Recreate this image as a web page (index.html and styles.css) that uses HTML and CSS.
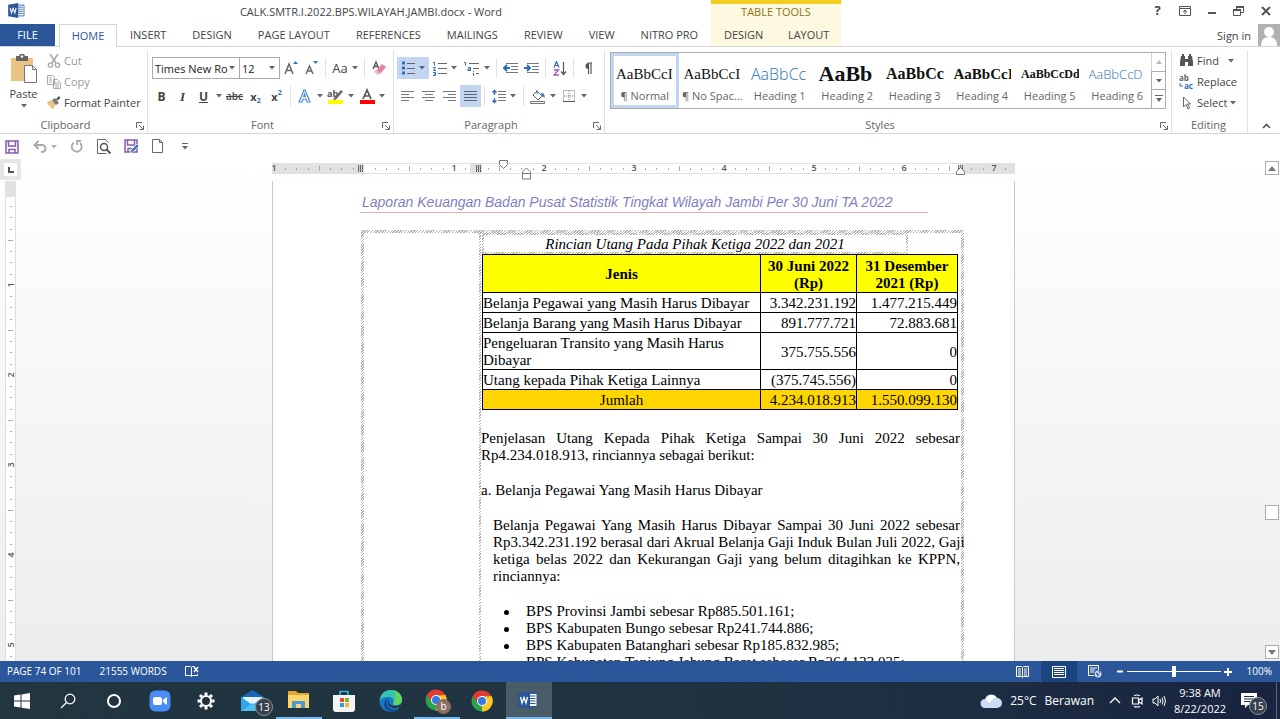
FILE: index.html
```
<!DOCTYPE html>
<html lang="en">
<head>
<meta charset="utf-8">
<title>CALK.SMTR.I.2022.BPS.WILAYAH.JAMBI.docx - Word</title>
<link rel="stylesheet" href="styles.css">
</head>
<body>
<svg class="defs" aria-hidden="true">
  <defs>
    <symbol id="caret" viewBox="0 0 6 4"><path d="M0 0h6L3 3.500z" fill="#666"/></symbol>
    <symbol id="launch" viewBox="0 0 8 8"><path d="M.5 6V.5H6M3 3l4 4M7.500 3.500v4h-4" fill="none" stroke="#666"/></symbol>
    <symbol id="chrome" viewBox="0 0 22 22">
      <path d="M11 11 20.200 5.800A10.500 10.500 0 0 1 11 21.500z" fill="#fdc727"/>
      <path d="M11 11V21.500A10.500 10.500 0 0 1 1.900 5.800z" fill="#2ba24c"/>
      <path d="M1.900 5.800 6.800 13.500 11 6.200H20.400A10.500 10.500 0 0 0 1.900 5.800z" fill="#e33b2e"/>
      <path d="M15.200 13.500 11 21.500A10.500 10.500 0 0 0 20.400 6.200H11z" fill="#fdc727"/>
      <circle cx="11" cy="11" r="5" fill="#fff"/><circle cx="11" cy="11" r="4" fill="#3479e8"/>
    </symbol>
    <symbol id="word" viewBox="0 0 20 18">
      <path d="M10 2.500h9v13h-9z" fill="#fff" stroke="#2b579a"/><path d="M12 5h5.500M12 7.500h5.500M12 10h5.500M12 12.500h5.500" stroke="#2b579a"/>
      <path d="M0 2 12 0v18L0 16z" fill="#2b579a"/><path d="m2.500 6 1.500 6L6 6.500 8 12l1.500-6" fill="none" stroke="#fff" stroke-width="1.300"/>
    </symbol>
    <pattern id="ticks-h" width="90" height="11" patternUnits="userSpaceOnUse" x="2">
      <path d="M11.500 5v2M22.500 5v2M34.500 5v2M45.500 3v5M56.500 5v2M67.500 5v2M79.500 5v2" stroke="#aaa"/>
    </pattern>
    <pattern id="ticks-v" width="11" height="90" patternUnits="userSpaceOnUse" y="14">
      <path d="M5 11.500h2M5 22.500h2M5 34.500h2M3 45.500h5M5 56.500h2M5 67.500h2M5 79.500h2" stroke="#aaa"/>
    </pattern>
  </defs>
</svg>

<header class="titlebar">
  <svg class="app-icon" width="17" height="15"><use href="#word"/></svg>
  <h1 class="title">CALK.SMTR.I.2022.BPS.WILAYAH.JAMBI.docx - Word</h1>
  <div class="tools-title">TABLE TOOLS</div>
  <div class="window-buttons">
    <button aria-label="Help"><b>?</b></button>
    <button aria-label="Ribbon display options"><svg width="12" height="10"><path d="M.5.5h11v9H.5zM1 2.500h10M6 8V4M4 6l2-2 2 2" fill="none" stroke="#555"/></svg></button>
    <button aria-label="Minimize"><svg width="10" height="10"><path d="M1 7h8" stroke="#555" stroke-width="2"/></svg></button>
    <button aria-label="Restore"><svg width="11" height="10"><path d="M3.500 3V1h7v5.500H8M.5 4h7v5.500h-7z" fill="none" stroke="#555"/><path d="M3 1h8M0 4h8" stroke="#555" stroke-width="2"/></svg></button>
    <button aria-label="Close"><svg width="10" height="10"><path d="m1 1 8 8M9 1 1 9" stroke="#555" stroke-width="2"/></svg></button>
  </div>
</header>

<nav class="tabs">
  <button class="tab file">FILE</button>
  <button class="tab active">HOME</button>
  <button class="tab">INSERT</button>
  <button class="tab">DESIGN</button>
  <button class="tab">PAGE LAYOUT</button>
  <button class="tab">REFERENCES</button>
  <button class="tab">MAILINGS</button>
  <button class="tab">REVIEW</button>
  <button class="tab">VIEW</button>
  <button class="tab">NITRO PRO</button>
  <div class="context-tabs"><button class="tab">DESIGN</button><button class="tab">LAYOUT</button></div>
  <a class="signin" href="#">Sign in <svg width="22" height="22"><path d="M0 0h22v22H0z" fill="#b1b1b1"/><circle cx="11" cy="8" r="5" fill="#fff"/><path d="M3 22c0-6 3-9 8-9s8 3 8 9z" fill="#fff"/></svg></a>
</nav>

<section class="ribbon">
  <div class="group clipboard">
    <div class="group-body">
      <button class="paste">
        <svg width="28" height="29"><path d="M1 4h22v23H1z" fill="#eac282"/><path d="M6 2h3l1-2h4l1 2h3v5H6z" fill="#666"/><circle cx="12" cy="2.500" r="1.200" fill="#fff"/><path d="M14.500 11.500h8l4 4v13h-12z" fill="#fff" stroke="#777"/><path d="M22.500 11.500v4h4" fill="none" stroke="#777"/></svg>
        <span>Paste</span>
        <svg width="6" height="4"><use href="#caret"/></svg>
      </button>
      <div class="stack">
        <button class="off"><svg width="14" height="14"><path d="M3 0l6 9M11 0 5 9" stroke="#aaa" stroke-width="1.600"/><circle cx="3.500" cy="11" r="2.200" fill="none" stroke="#aaa" stroke-width="1.300"/><circle cx="10.500" cy="11" r="2.200" fill="none" stroke="#aaa" stroke-width="1.300"/></svg>Cut</button>
        <button class="off"><svg width="14" height="14"><path d="M.5.500h5l2 2v7h-7zM6.500 4.500h4l3 3v6h-7zM2 3h3M2 5h3M2 7h3M8 8h4M8 10h4M8 12h4" fill="none" stroke="#aaa"/></svg>Copy</button>
        <button><svg width="14" height="14"><path d="M0 6 5 4l4 4-3 5-2-1-1-2-2-1z" fill="#eac282"/><path d="m5 4 3-2 4 5-3 2z" fill="#777"/><path d="m9 3 3-3 1.500 2-3 2.500z" fill="#555"/></svg>Format Painter</button>
      </div>
    </div>
    <div class="group-name">Clipboard<button class="launcher" aria-label="Clipboard options"><svg width="8" height="8"><use href="#launch"/></svg></button></div>
  </div>

  <div class="group font">
    <div class="group-body rows">
      <div class="row">
        <label class="combo face"><input aria-label="Font" value="Times New Ro"><svg width="6" height="4"><use href="#caret"/></svg></label><label class="combo size"><input aria-label="Font size" value="12"><svg width="6" height="4"><use href="#caret"/></svg></label>
        <button class="tool" aria-label="Grow font"><svg width="16" height="16"><path d="m2 14 4-10 4 10M3.500 10.500h5" fill="none" stroke="#666" stroke-width="1.500"/><path d="M10 4 12.500 1 15 4z" fill="#3a76b8"/></svg></button>
        <button class="tool" aria-label="Shrink font"><svg width="16" height="16"><path d="m2 14 3.500-8L9 14M3.500 11h4" fill="none" stroke="#666" stroke-width="1.500"/><path d="M9 1h5L11.500 4z" fill="#3a76b8"/></svg></button>
        <i class="sep"></i>
        <button class="tool wide case" aria-label="Change case">Aa<svg width="6" height="4"><use href="#caret"/></svg></button>
        <i class="sep"></i>
        <button class="tool" aria-label="Clear formatting"><svg width="16" height="16"><path d="m2 9 3-7 3 7M3 6.500h4" fill="none" stroke="#555" stroke-width="1.300"/><path d="m5 11 6-7 4 3-6 7z" fill="#e8819a"/><path d="m3 12 2-2 4 3-2 2z" fill="#f3b5c2"/></svg></button>
      </div>
      <div class="row">
        <button class="tool"><b>B</b></button>
        <button class="tool"><i class="ital">I</i></button>
        <button class="tool"><u>U</u></button>
        <button class="drop" aria-label="Underline style"><svg width="6" height="4"><use href="#caret"/></svg></button>
        <button class="tool strike"><s>abc</s></button>
        <button class="tool script">x<sub>2</sub></button>
        <button class="tool script">x<sup>2</sup></button>
        <i class="sep"></i>
        <button class="tool" aria-label="Text effects"><svg width="16" height="16"><path d="m2 14 5-12h1l5 12h-3l-1-3H6l-1 3zM6.700 8.500h1.700l-.9-2.500z" fill="#fff" stroke="#4a8ccc" stroke-width="1.200"/></svg></button>
        <button class="drop" aria-label="Effects"><svg width="6" height="4"><use href="#caret"/></svg></button>
        <button class="tool" aria-label="Highlight"><svg width="17" height="17"><text x="0" y="9" font-size="9" font-weight="bold" fill="#555">ab</text><path d="m7 10 7-8 2 1.500-7 8-3 .5z" fill="#666"/><path d="M1 12h15v4H1z" fill="#ff0"/></svg></button>
        <button class="drop" aria-label="Highlight colour"><svg width="6" height="4"><use href="#caret"/></svg></button>
        <button class="tool" aria-label="Font colour"><svg width="16" height="17"><path d="m4 11 4-9 4 9M5.500 8h5" fill="none" stroke="#555" stroke-width="1.700"/><path d="M1 12h15v4H1z" fill="red"/></svg></button>
        <button class="drop" aria-label="Colours"><svg width="6" height="4"><use href="#caret"/></svg></button>
      </div>
    </div>
    <div class="group-name">Font<button class="launcher" aria-label="Font options"><svg width="8" height="8"><use href="#launch"/></svg></button></div>
  </div>

  <div class="group paragraph">
    <div class="group-body rows">
      <div class="row">
        <button class="tool wide on" aria-label="Bullets"><svg width="13" height="14"><path d="M0 2h3M0 7h3M0 12h3" stroke="#2f6db5" stroke-width="3"/><path d="M5 2.500h8M5 7.500h8M5 12.500h8" stroke="#666"/></svg><svg width="6" height="4"><use href="#caret"/></svg></button>
        <button class="tool wide" aria-label="Numbering"><svg width="14" height="15"><path d="M0 1.500h1.500V4.500M0 6.500h2.500L.5 9.500H3M0 11.500h2.500v3H0M1 13h1" fill="none" stroke="#2f6db5"/><path d="M5 2.500h9M5 7.500h9M5 12.500h9" stroke="#666"/></svg><svg width="6" height="4"><use href="#caret"/></svg></button>
        <button class="tool wide" aria-label="Multilevel list"><svg width="16" height="15"><path d="M0 1.500h1.500V4.500M4 6.500h2.500v3H4V8h2M9.500 10v1M9.500 12v3" fill="none" stroke="#2f6db5"/><path d="M5 2.500h10M9 7.500h6M12 12.500h3" stroke="#666"/></svg><svg width="6" height="4"><use href="#caret"/></svg></button>
        <i class="sep"></i>
        <button class="tool" aria-label="Decrease indent"><svg width="15" height="12"><path d="M3 1.500h12M8 4.500h7M8 7.500h7M3 10.500h12" stroke="#777"/><path d="M1 6h6M4 3 1 6l3 3" fill="none" stroke="#2f6db5" stroke-width="2"/></svg></button>
        <button class="tool" aria-label="Increase indent"><svg width="15" height="12"><path d="M3 1.500h12M8 4.500h7M8 7.500h7M3 10.500h12" stroke="#777"/><path d="M0 6h6M3 3l3 3-3 3" fill="none" stroke="#2f6db5" stroke-width="2"/></svg></button>
        <i class="sep"></i>
        <button class="tool" aria-label="Sort"><svg width="14" height="15"><path d="m1 6.500 2.500-6 2.500 6M2 4.500h3" fill="none" stroke="#2f6db5" stroke-width="1.200"/><path d="M1 9h4.500L1 14h5" fill="none" stroke="#9b5bb5" stroke-width="1.300"/><path d="M10.500 1v12M8 10.500l2.500 3 2.500-3" fill="none" stroke="#555" stroke-width="1.200"/></svg></button>
        <i class="sep"></i>
        <button class="tool" aria-label="Show marks"><svg width="10" height="13"><path d="M5 1h4M5.500 1v11M8 1v11" stroke="#555" stroke-width="1.200"/><path d="M5.500 1a3 3 0 0 0 0 6z" fill="#555"/></svg></button>
      </div>
      <div class="row">
        <button class="tool" aria-label="Align left"><svg width="14" height="12"><path d="M0 1.500h13M0 4.500h8M0 7.500h13M0 10.500h8" stroke="#777"/></svg></button>
        <button class="tool" aria-label="Center"><svg width="14" height="12"><path d="M0 1.500h13M3 4.500h8M0 7.500h13M3 10.500h8" stroke="#777"/></svg></button>
        <button class="tool" aria-label="Align right"><svg width="14" height="12"><path d="M0 1.500h13M5 4.500h8M0 7.500h13M5 10.500h8" stroke="#777"/></svg></button>
        <button class="tool on" aria-label="Justify"><svg width="14" height="12"><path d="M0 1.500h13M0 4.500h13M0 7.500h13M0 10.500h13" stroke="#666"/></svg></button>
        <i class="sep"></i>
        <button class="tool wide" aria-label="Line spacing"><svg width="14" height="15"><path d="M2.500 1v5M2.500 9v5M.5 3.500l2-2 2 2M.5 11.500l2 2 2-2" fill="none" stroke="#2f6db5" stroke-width="1.400"/><path d="M6 2.500h8M6 5.500h8M6 8.500h8M6 11.500h8" stroke="#777"/></svg><svg width="6" height="4"><use href="#caret"/></svg></button>
        <i class="sep"></i>
        <button class="tool wide" aria-label="Shading"><svg width="16" height="15"><path d="m3 6 4-4 5 5-4 4z" fill="#fff" stroke="#666"/><path d="M7 5V1" stroke="#666"/><path d="M11 4c3 0 4 2 3.500 5L12 7z" fill="#3a76b8"/><path d="M.5 12.500h14v2H.5z" fill="#fff" stroke="#777"/></svg><svg width="6" height="4"><use href="#caret"/></svg></button>
        <button class="tool wide" aria-label="Borders"><svg width="14" height="13"><path d="M.5.500h11v11H.5zM6 1v10M1 6h10" fill="none" stroke="#777" stroke-dasharray="1 1"/><path d="M0 11.500h12" stroke="#555"/></svg><svg width="6" height="4"><use href="#caret"/></svg></button>
      </div>
    </div>
    <div class="group-name">Paragraph<button class="launcher" aria-label="Paragraph options"><svg width="8" height="8"><use href="#launch"/></svg></button></div>
  </div>

  <div class="group styles">
    <div class="group-body">
      <div class="gallery">
        <button class="style chosen"><span class="sample">AaBbCcI</span><span>¶ Normal</span></button>
        <button class="style"><span class="sample">AaBbCcI</span><span>¶ No Spac...</span></button>
        <button class="style"><span class="sample sans">AaBbCc</span><span>Heading 1</span></button>
        <button class="style"><span class="sample big">AaBb</span><span>Heading 2</span></button>
        <button class="style"><span class="sample bold three">AaBbCc</span><span>Heading 3</span></button>
        <button class="style"><span class="sample bold">AaBbCcI</span><span>Heading 4</span></button>
        <button class="style"><span class="sample small">AaBbCcDd</span><span>Heading 5</span></button>
        <button class="style"><span class="sample sans six">AaBbCcD</span><span>Heading 6</span></button>
        <div class="gallery-scroll">
          <button class="dim" aria-label="Up"><svg width="6" height="4"><path d="M0 4h6L3 0z" fill="#bbb"/></svg></button>
          <button aria-label="Down"><svg width="6" height="4"><use href="#caret"/></svg></button>
          <button aria-label="More"><svg width="8" height="8"><path d="M0 .5h8" stroke="#666"/><path d="M1 3h6L4 7z" fill="#666"/></svg></button>
        </div>
      </div>
    </div>
    <div class="group-name">Styles<button class="launcher" aria-label="Styles options"><svg width="8" height="8"><use href="#launch"/></svg></button></div>
  </div>

  <div class="group editing">
    <div class="group-body">
      <div class="stack">
        <button><svg width="15" height="13"><path d="M2 2h4v3h3V2h4l1 6v4H9V8H6v4H1V8z" fill="#555"/><path d="M3 0h2v2H3zM10 0h2v2h-2z" fill="#555"/></svg>Find<svg class="gap" width="6" height="4"><use href="#caret"/></svg></button>
        <button><svg width="15" height="16"><text x="0" y="7" font-size="8" font-weight="bold" fill="#666">ab</text><text x="5" y="15" font-size="8" font-weight="bold" fill="#2f6db5">ac</text><path d="M1 9v3h3" fill="none" stroke="#2f6db5"/></svg>Replace</button>
        <button><svg width="15" height="14"><path d="M4.500 1v10l2.500-2.500 2 4.500 1.500-1-2-4h3z" fill="#fff" stroke="#666"/></svg>Select<svg width="6" height="4"><use href="#caret"/></svg></button>
      </div>
    </div>
    <div class="group-name">Editing</div>
  </div>
  <button class="collapse" aria-label="Collapse ribbon"><svg width="9" height="6"><path d="m1 5 3.500-3.500L8 5" fill="none" stroke="#555" stroke-width="1.600"/></svg></button>
</section>

<div class="quick">
  <button aria-label="Save"><svg width="14" height="14"><path d="M1 1h12v12H1zM3.500 1v5h7V1M4 13V9.500h6V13" fill="none" stroke="#8a5aae" stroke-width="1.500"/></svg></button>
  <button class="undo" aria-label="Undo"><svg width="14" height="14"><path d="M2 5h7a3.500 3.500 0 0 1 0 7H8M5.500 1 1.500 5l4 4" fill="none" stroke="#aaa" stroke-width="2"/></svg><svg width="6" height="4" opacity=".5"><use href="#caret"/></svg></button>
  <button aria-label="Repeat"><svg width="14" height="14"><path d="M4 2.500A5 5 0 1 0 10 3M7 5V1h4" fill="none" stroke="#aaa" stroke-width="1.800"/></svg></button>
  <button aria-label="Print preview"><svg width="14" height="16"><path d="M9.500 14.500h-9V.5h8l3 3" fill="none" stroke="#666"/><circle cx="7" cy="8" r="3.500" fill="none" stroke="#555" stroke-width="1.500"/><path d="m9.500 10.500 4 4" stroke="#555" stroke-width="2"/></svg></button>
  <button aria-label="Save as"><svg width="15" height="15"><path d="M1 1h12v12H1zM3.500 1v5h7V1M4 13V9.500h4" fill="none" stroke="#8a5aae" stroke-width="1.500"/><path d="m6 14 1-3 6-6 2 2-6 6z" fill="#3a76b8" stroke="#fff" stroke-width=".6"/></svg></button>
  <button aria-label="New"><svg width="12" height="15"><path d="M.5.500h7l3 3v10H.5zM7.500.500v3h3" fill="none" stroke="#666"/></svg></button>
  <button aria-label="Customize"><svg width="6" height="7"><path d="M0 .5h6" stroke="#666"/><path d="M0 3h6L3 6.500z" fill="#666"/></svg></button>
</div>

<main class="workspace">
  <aside class="left-rail">
    <div class="tab-corner"><svg width="8" height="8"><path d="M2 1v5h5" fill="none" stroke="#555" stroke-width="2"/></svg></div>
    <svg class="vruler" width="11" height="520">
      <path d="M0 0h11v16H0z" fill="#e1e1e1"/><path d="M0 16h11v504H0z" fill="#fff"/><path d="M0 22h11v498H0z" fill="url(#ticks-v)"/><path d="M.5 16v504M10.500 16v504" stroke="#dedede"/>
      <g class="ruler-text"><text transform="translate(9 104) rotate(-90)">1</text><text transform="translate(9 194) rotate(-90)">2</text><text transform="translate(9 284) rotate(-90)">3</text><text transform="translate(9 374) rotate(-90)">4</text><text transform="translate(9 464) rotate(-90)">5</text></g>
    </svg>
  </aside>
  <div class="canvas">
    <svg class="hruler" width="743" height="21">
      <g transform="translate(0 4)">
        <path d="M0 0h743v11H0z" fill="#e1e1e1"/><path d="M92 1h596v9H92z" fill="#fff"/><path d="M198 0h12v11h-12z" fill="#e1e1e1"/><path d="M9 0h726v11H9z" fill="url(#ticks-h)"/>
        <path d="M86.500 2v7M88.500 2v7M90.500 2v7M204.500 2v7M206.500 2v7M208.500 2v7M686.500 2v7M688.500 2v7M690.500 2v7" stroke="#555"/><path d="M86 3.500h5M86 6.500h5M204 3.500h5M204 6.500h5M686 3.500h5M686 6.500h5" stroke="#999"/>
        <g class="ruler-text"><text x="2" y="8">1</text><text x="182" y="8">1</text><text x="272" y="8">2</text><text x="362" y="8">3</text><text x="452" y="8">4</text><text x="542" y="8">5</text><text x="632" y="8">6</text><text x="722" y="8">7</text></g>
      </g>
      <path d="M227.500 1.500h8v4l-4 4-4-4zM250.500 20v-7l4-4 4 4v7zM250.500 14.500h8M684.500 15.500v-3l4-4 4 4v3z" fill="#fff" stroke="#777"/>
    </svg>
    <article class="page">
      <p class="doc-header">Laporan Keuangan Badan Pusat Statistik Tingkat Wilayah Jambi Per 30 Juni TA 2022</p>
      <div class="outer">
        <div class="margin-cell"></div>
        <div class="text-cell">
          <table class="debts">
            <caption><span>Rincian Utang Pada Pihak Ketiga 2022 dan 2021</span></caption>
            <colgroup><col class="c-name"><col class="c-cur"><col class="c-prev"></colgroup>
            <thead><tr><th>Jenis</th><th>30 Juni 2022<br>(Rp)</th><th>31 Desember<br>2021 (Rp)</th></tr></thead>
            <tbody>
              <tr><td>Belanja Pegawai yang Masih Harus Dibayar</td><td>3.342.231.192</td><td>1.477.215.449</td></tr>
              <tr><td>Belanja Barang yang Masih Harus Dibayar</td><td>891.777.721</td><td>72.883.681</td></tr>
              <tr><td>Pengeluaran Transito yang Masih Harus Dibayar</td><td>375.755.556</td><td>0</td></tr>
              <tr><td>Utang kepada Pihak Ketiga Lainnya</td><td>(375.745.556)</td><td>0</td></tr>
            </tbody>
            <tfoot><tr><td>Jumlah</td><td>4.234.018.913</td><td>1.550.099.130</td></tr></tfoot>
          </table>
          <div class="prose">
            <p>Penjelasan Utang Kepada Pihak Ketiga Sampai 30 Juni 2022 sebesar Rp4.234.018.913, rinciannya sebagai berikut:</p>
            <p>a. Belanja Pegawai Yang Masih Harus Dibayar</p>
            <p class="indent"><span class="line">Belanja Pegawai Yang Masih Harus Dibayar Sampai 30 Juni 2022 sebesar</span> <span class="line">Rp3.342.231.192 berasal dari Akrual Belanja Gaji Induk Bulan Juli 2022, Gaji</span> <span class="line">ketiga belas 2022 dan Kekurangan Gaji yang belum ditagihkan ke KPPN,</span> rinciannya:</p>
            <ul>
              <li>BPS Provinsi Jambi sebesar Rp885.501.161;</li>
              <li>BPS Kabupaten Bungo sebesar Rp241.744.886;</li>
              <li>BPS Kabupaten Batanghari sebesar Rp185.832.985;</li>
              <li>BPS Kabupaten Tanjung Jabung Barat sebesar Rp264.133.035;</li>
            </ul>
          </div>
        </div>
      </div>
    </article>
  </div>
  <div class="scrollbar">
    <button aria-label="Scroll up"><svg width="8" height="5"><path d="M0 5h8L4 0z" fill="#777"/></svg></button>
    <div class="track"><div class="thumb"></div></div>
    <button aria-label="Scroll down"><svg width="8" height="5"><path d="M0 0h8L4 5z" fill="#777"/></svg></button>
  </div>
</main>

<footer class="status">
  <span class="pages">PAGE 74 OF 101</span><span>21555 WORDS</span>
  <button class="proof" aria-label="Proofing"><svg width="15" height="13"><path d="M6.500 2.500v9l-1-1h-5v-9h5zl1-1h2M6.500 11.500l1-1h5V9" fill="none" stroke="#fff"/><path d="m9 2 4 5M13 2 9 7" stroke="#fff" stroke-width="1.400"/></svg></button>
  <div class="views">
    <button aria-label="Read mode"><svg width="13" height="12"><path d="M6.500 2v9.500l-1-1h-5V.500h5l1 1 1-1h5v10h-5l-1 1M2 3h3M2 5h3M2 7h3M2 9h3M8 3h3M8 5h3M8 7h3M8 9h3" fill="none" stroke="#fff"/></svg></button>
    <button class="current" aria-label="Print layout"><svg width="14" height="12"><path d="M.5.500h13v11H.5zM2 2.500h10M2 4.500h10M2 6.500h10M2 8.500h10" fill="none" stroke="#fff"/></svg></button>
    <button aria-label="Web layout"><svg width="14" height="13"><path d="M6 10.500H.5V.500h10V5M2 3h7M2 5h5M2 7h4" fill="none" stroke="#fff"/><circle cx="10" cy="9" r="3.500" fill="#c9d5e8"/><path d="M8 8l2 1v2M11 6l1 2" stroke="#2b579a"/></svg></button>
  </div>
  <div class="zoom"><button aria-label="Zoom out"><svg width="7" height="7"><path d="M0 3.500h6" stroke="#fff" stroke-width="2"/></svg></button><input type="range" min="0" max="100" value="50" aria-label="Zoom"><button aria-label="Zoom in"><svg width="8" height="8"><path d="M0 4h8M4 0v8" stroke="#fff" stroke-width="2"/></svg></button><span>100%</span></div>
</footer>

<nav class="taskbar">
  <button aria-label="Start"><svg width="16" height="16"><path d="M0 2.500 6.500 1.500V7.500H0zM7.500 1.400 16 0v7.500H7.500zM0 8.500h6.500v6L0 13.500zM7.500 8.500H16V16l-8.500-1.300z" fill="#fff"/></svg></button>
  <button aria-label="Search"><svg width="16" height="16"><circle cx="10" cy="6" r="4.800" fill="none" stroke="#fff" stroke-width="1.300"/><path d="M6.500 9.500 1 15" stroke="#fff" stroke-width="1.300"/></svg></button>
  <button aria-label="Cortana"><svg width="16" height="16"><circle cx="8" cy="8" r="6" fill="none" stroke="#fff" stroke-width="2"/></svg></button>
  <button aria-label="Zoom"><svg width="22" height="22"><rect x=".5" y=".5" width="21" height="21" rx="6" fill="#4a8cf7"/><rect x="4" y="7" width="9" height="8" rx="2" fill="#fff"/><path d="m14 10 4-3v8l-4-3z" fill="#fff"/></svg></button>
  <button aria-label="Settings"><svg width="18" height="18"><circle cx="9" cy="9" r="5" fill="none" stroke="#fff" stroke-width="2"/><path d="M9 .5v3M9 14.500v3M.5 9h3M14.500 9h3M3 3l2 2M13 13l2 2M15 3l-2 2M5 13l-2 2" stroke="#fff" stroke-width="3"/></svg></button>
  <button class="badged" aria-label="Mail"><svg width="23" height="21"><path d="M0 7 11.500 0 23 7v14H0z" fill="#1669b5"/><path d="M2 7h19v8H2z" fill="#e8f3fb"/><path d="m0 7 11.500 8L23 7v14H0z" fill="#2fa6e9"/><path d="m0 21 11.500-8L23 21z" fill="#4fc0f5"/></svg><span class="badge">13</span></button>
  <button class="running" aria-label="Files"><svg width="21" height="19"><path d="M0 1h8l2 2h11v14H0z" fill="#e3a92f"/><path d="M0 5h21v13H0z" fill="#fcd56a"/><path d="M4 18v-7h13v7h-4v-4H8v4z" fill="#4a9ade"/></svg></button>
  <button aria-label="Store"><svg width="22" height="22"><path d="M7 5V1.500h8V5" fill="none" stroke="#32b4ea" stroke-width="1.600"/><path d="M0 5h22v14a3 3 0 0 1-3 3H3a3 3 0 0 1-3-3z" fill="#f4f4f4"/><path d="M7 8h4v4H7z" fill="#e84b2c"/><path d="M12 8h4v4h-4z" fill="#7db928"/><path d="M7 13h4v4H7z" fill="#26a0dd"/><path d="M12 13h4v4h-4z" fill="#f8b51e"/></svg></button>
  <button aria-label="Edge"><svg width="23" height="22"><circle cx="11.500" cy="11" r="11" fill="#1b78c9"/><path d="M.7 10C2 2 8 0 12 0c6 0 11 4 11 9.500 0 4-3 5.500-6 5.500-2 0-3.500-.7-3-1.500 1.500-2 1-6-3.500-6.500C6 6.500 2 8 .7 10z" fill="#37c2b0"/><path d="M14 0c5 1 9 5 9 9.500 0 4-3 5.500-6 5.500-2 0-3.500-.7-3-1.500C17 10 18 4 14 0z" fill="#63d65f"/><path d="M9 8.500c-3 5 0 11 6 11 3 0 5-1 6-2-2 3-6 5-10 4.500C4 20 3 11 9 8.500z" fill="#124c94"/><path d="M11 9c-2 1-2 7 5 7 3 0 5-1 6-2l-1 3c-3 2-11 2-12-4 0-2 1-3.500 2-4z" fill="#21363f"/></svg></button>
  <button class="badged running" aria-label="Chrome profile"><svg width="22" height="22"><use href="#chrome"/></svg><span class="badge profile">b</span></button>
  <button aria-label="Chrome"><svg width="22" height="22"><use href="#chrome"/></svg></button>
  <button class="focused" aria-label="Word"><svg width="20" height="18"><use href="#word"/></svg></button>
  <div class="tray">
    <button class="weather"><svg width="22" height="14"><path d="M5 14a4.500 4.500 0 0 1 0-9 6.500 6.500 0 0 1 12-1 5 5 0 0 1 0 10z" fill="#c9dcf5"/><path d="M6 6a6 6 0 0 1 11-2 7 7 0 0 0-7 5z" fill="#fff"/></svg><span>25°C</span><span>Berawan</span></button>
    <button aria-label="Hidden icons"><svg width="12" height="7"><path d="m1 6 5-5 5 5" fill="none" stroke="#fff" stroke-width="1.300"/></svg></button>
    <button aria-label="Meet now"><svg width="12" height="14"><path d="M3 1.500q3-1 6 0M3 12.500q3 1 6 0M1.500 4h6v6h-6zM8 6l3-2v6L8 8" fill="none" stroke="#fff" stroke-width="1.200"/></svg></button>
    <button aria-label="Volume"><svg width="15" height="12"><path d="M1 4h2l3-3v10L3 8H1zM8 4q1 2 0 4M10 2.500q2 3.500 0 7M12 1q3 5 0 10" fill="none" stroke="#fff"/></svg></button>
    <button class="clock"><span>9:38 AM</span><span>8/22/2022</span></button>
    <button class="notify badged" aria-label="Notifications"><svg width="16" height="15"><path d="M0 0h16v12h-9l-3 3v-3H0z" fill="#fff"/><path d="M3 3.500h10M3 6h10M3 8.500h6" stroke="#1a2a3f"/></svg><span class="badge">15</span></button>
  </div>
</nav>
</body>
</html>
```
FILE: styles.css
```
* { box-sizing: border-box; }
html, body { height: 100%; margin: 0; }
body { display: flex; flex-direction: column; overflow: hidden; background: #fff; color: #444; font: 11px/15px "Open Sans", "Noto Sans", sans-serif; }
button, input { font: inherit; color: inherit; border: 0; background: none; padding: 0; margin: 0; }
button { display: flex; align-items: center; justify-content: center; white-space: nowrap; }
svg { display: block; flex: none; }
p, ul, h1 { margin: 0; padding: 0; }
.defs { position: absolute; width: 0; height: 0; }

/* Title bar */
.titlebar { display: flex; flex: none; height: 24px; align-items: center; position: relative; }
.app-icon { margin: 0 0 3px 8px; }
.title { width: 742px; text-align: center; font-size: 11px; font-weight: 400; position: absolute; left: 0; top: 4px; }
.tools-title { position: absolute; left: 711px; top: 0; width: 130px; height: 24px; border-top: 4px solid #f3cd20; background: #fdf8e0; color: #8f7420; text-align: center; line-height: 16px; }
.window-buttons { display: flex; margin-left: auto; padding: 0 1px 3px 0; }
.window-buttons button { width: 27px; height: 20px; font-size: 13px; }

/* Tabs */
.tabs { display: flex; flex: none; height: 23px; border-bottom: 1px solid #d5d5d5; }
.tab { padding: 0 13px 2px; height: 22px; font-size: 11px; }
.file { width: 55px; margin-right: 4px; background: #2b579a; color: #fff; }
.active { width: 58px; height: 23px; background: #fff; border: 1px solid #d5d5d5; border-bottom: 0; color: #2b579a; }
.context-tabs { display: flex; width: 130px; background: #fdf8e0; }
.context-tabs .tab { flex: 1; padding: 0 0 2px; }
.signin { margin-left: auto; display: flex; align-items: center; gap: 7px; color: #444; text-decoration: none; }

/* Ribbon */
.ribbon { display: flex; flex: none; height: 87px; padding: 3px 0 0; border-bottom: 1px solid #d5d5d5; position: relative; }
.group { display: flex; flex-direction: column; border-right: 1px solid #e1e1e1; }
.group-body { display: flex; flex: 1; }
.group-name { position: relative; text-align: center; color: #666; height: 16px; line-height: 16px; padding-right: 16px; }
.launcher { position: absolute; right: 3px; top: 5px; }
.clipboard { width: 148px; }
.font { width: 246px; }
.paragraph { width: 211px; }
.styles { flex: 1; }
.editing { width: 76px; margin-right: 32px; }
.editing .group-name { padding-right: 2px; }
.collapse { position: absolute; right: 9px; bottom: 4px; }
.paste { flex-direction: column; width: 37px; margin-left: 5px; justify-content: flex-start; padding-top: 4px; gap: 3px; }
.stack { display: flex; flex-direction: column; padding-left: 5px; }
.stack button { height: 21px; gap: 3px; justify-content: flex-start; }
.off { color: #999; }
.gap { margin-left: 6px; }
.editing .stack { padding-left: 7px; }
.rows { flex-direction: column; gap: 6px; padding: 7px 3px 0; }
.row { display: flex; align-items: center; height: 22px; }
.row > * { flex: none; }
.tool { width: 21px; height: 22px; }
.wide { width: 32px; gap: 4px; }
.drop { width: 10px; height: 22px; }
.on { background: #c2d5f2; }
.sep { width: 1px; height: 20px; margin: 0 3px; background: #e1e1e1; }
.ital { font-family: "Liberation Serif", serif; font-weight: 700; font-size: 13px; }
.tool b, .tool u { font-size: 12px; font-weight: 700; }
.strike { font-size: 10px; font-weight: 600; }
.script { font-weight: 700; }
.tool sub, .tool sup { font-size: 7px; line-height: 7px; color: #2f6db5; }
.tool sub { align-self: flex-end; margin-bottom: 3px; }
.tool sup { align-self: flex-start; margin-top: 4px; }
.case { font-size: 13px; }
.combo { display: flex; align-items: center; height: 22px; border: 1px solid #ababab; padding: 0 4px 0 2px; color: #222; }
.combo input { flex: 1; min-width: 0; outline: 0; }
.face { width: 88px; margin-left: 1px; }
.size { width: 40px; border-left: 0; }
.gallery { display: flex; flex: 1; height: 57px; margin: 2px 5px 0; border: 1px solid #ababab; }
.style { flex: 1; min-width: 0; flex-direction: column; overflow: hidden; border: 3px solid transparent; padding: 3px 2px 0; align-items: center; gap: 2px; color: #666; }
.chosen { border-color: #c2d5f2; }
.sample { width: 100%; height: 24px; overflow: hidden; color: #111; font: 15px/24px "Liberation Serif", serif; text-align: left; }
.sample.bold { font-weight: 700; }
.sample.three { font-size: 16px; }
.sample.big { font-size: 22px; font-weight: 700; }
.sample.small { font-size: 12px; font-weight: 700; }
.sample.sans { font: 300 16px/24px "Open Sans", sans-serif; color: #2e74b5; }
.sample.six { font-size: 13px; }
.gallery-scroll { display: flex; flex-direction: column; width: 14px; }
.gallery-scroll button { flex: 1; border-left: 1px solid #ababab; border-top: 1px solid #ababab; }
.gallery-scroll .dim { border-top: 0; border-left-color: #d5d5d5; }

/* Quick access */
.quick { display: flex; flex: none; height: 25px; align-items: center; padding-left: 2px; gap: 7px; }
.quick button { width: 20px; height: 22px; }
.quick .undo { width: 31px; gap: 4px; }

/* Workspace */
.workspace { display: flex; flex: 1; min-height: 0; overflow: hidden; background: linear-gradient(#fff, #ededed); }
.left-rail { width: 22px; flex: none; display: flex; flex-direction: column; }
.tab-corner { width: 21px; height: 21px; border: 4px solid #e6e6e6; background: #fff; display: grid; place-items: center; margin-bottom: 1px; flex: none; }
.vruler { margin-left: 5px; }
.ruler-text { font: 600 9px "Open Sans", sans-serif; fill: #555; text-anchor: middle; }
.canvas { flex: 1; display: flex; flex-direction: column; align-items: center; }
.hruler { flex: none; }
.page { width: 743px; min-height: 1000px; background: #fff; border: 1px solid #c9c9c9; border-top: 0; padding: 0 50px 0 88px; margin-top: 1px; flex: none; }
.doc-header { margin: 12px 36px 17px -1px; padding: 0 0 1px 2px; border-bottom: 1px solid #f2a9ad; color: #7f7fc0; font: italic 14px/18px "Liberation Sans", Arial, sans-serif; }
.outer { display: flex; height: 900px; border: 3px solid; border-image: repeating-linear-gradient(135deg, #b0b0b0 0 1px, #fff 1px 2px) 3; }
.margin-cell { width: 115px; flex: none; }
.text-cell { flex: 1; min-width: 0; border-left: 2px solid; border-image: repeating-linear-gradient(135deg, #b0b0b0 0 1px, #fff 1px 2px) 2; color: #000; font: 15px/17px "Liberation Serif", "Times New Roman", serif; }
.debts { border-collapse: collapse; table-layout: fixed; width: 476px; margin-left: 1px; }
.debts caption { text-align: left; }
.debts caption span { display: block; width: 426px; height: 21px; border: 2px solid; border-image: repeating-linear-gradient(135deg, #b0b0b0 0 1px, #fff 1px 2px) 2; text-align: center; font-style: italic; line-height: 18px; }
.c-cur { width: 96px; }
.c-prev { width: 101px; }
.debts th, .debts td { border: 1px solid #000; padding: 2px 0 0; height: 20px; text-align: right; }
.debts th { background: #ff0; text-align: center; height: 38px; }
.debts td:first-child { text-align: left; }
.debts tfoot td { background: #ffd500; }
.debts tfoot td:first-child { text-align: center; }
.prose { display: flex; flex-direction: column; gap: 18px; padding-top: 20px; text-align: justify; width: 479px; }
.indent { margin-left: 12px; }
.line { display: block; white-space: nowrap; text-align-last: justify; }
.prose ul { list-style: none; padding-left: 45px; }
.prose li { position: relative; }
.prose li::before { content: ""; position: absolute; left: -22px; top: 7px; width: 5px; height: 5px; border-radius: 50%; background: #000; }
.scrollbar { width: 15px; flex: none; display: flex; flex-direction: column; margin: 2px 0; }
.scrollbar button { height: 14px; width: 14px; border: 1px solid #ababab; background: #fff; }
.track { flex: 1; display: flex; flex-direction: column; justify-content: flex-end; padding-bottom: 125px; }
.thumb { width: 14px; height: 15px; border: 1px solid #ababab; background: #fff; }

/* Status bar */
.status { display: flex; flex: none; align-items: center; height: 21px; background: #2b579a; color: #fff; padding-left: 7px; gap: 18px; font-size: 10px; }
.views { display: flex; margin-left: auto; align-self: stretch; }
.views button { width: 36px; }
.views .current { background: #1e4480; }
.zoom { display: flex; align-items: center; gap: 3px; margin: 0 8px 0 -14px; }
.zoom span { margin-left: 12px; }
.zoom input { appearance: none; width: 94px; height: 12px; background: linear-gradient(#fff, #fff) center / 100% 1px no-repeat; }
.zoom input::-webkit-slider-thumb { appearance: none; width: 4px; height: 11px; background: #fff; }

/* Taskbar */
.taskbar { display: flex; flex: none; height: 37px; background: linear-gradient(90deg, #21363f, #1f3242 60%, #182440); color: #fff; }
.taskbar > button { width: 46px; padding-right: 2px; }
.badged { position: relative; }
.badge { position: absolute; left: 25px; top: 16px; width: 18px; height: 18px; border-radius: 50%; background: #37414b; border: 1px solid #8a9299; line-height: 16px; font-size: 10px; }
.profile { left: 22px; top: 17px; width: 15px; height: 15px; line-height: 13px; background: #8d6e63; border-color: #8d6e63; }
.running { border-bottom: 2px solid #76b9ed; }
.focused { background: #4a5c67; border-bottom: 2px solid #76b9ed; }
.tray { display: flex; margin-left: auto; border-right: 1px solid #5a6578; margin-right: 3px; font-size: 11px; }
.tray button { width: 22px; }
.tray .weather { width: auto; gap: 8px; font-size: 12px; padding-right: 10px; }
.tray .clock { width: 60px; flex-direction: column; line-height: 16px; }
.tray .notify { width: 46px; padding-right: 8px; }
.notify .badge { left: 19px; top: 15px; }
```
